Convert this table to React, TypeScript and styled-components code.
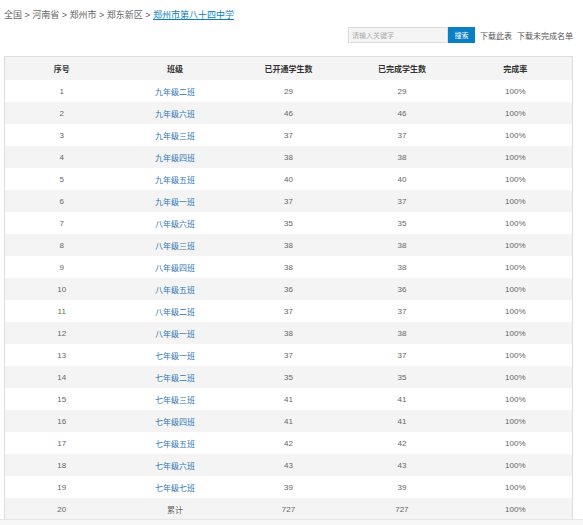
import React from "react";
import styled, { createGlobalStyle } from "styled-components";

const Global = createGlobalStyle`
  html, body { margin: 0; padding: 0; background: #fff; }
  body { font-family: "Liberation Sans", Arial, "Noto Sans CJK SC", sans-serif; color: #666; }
`;

const Page = styled.div`
  padding: 9px 10px 0 4px;
  display: flex;
  flex-direction: column;
`;

const Crumbs = styled.div`
  font-size: 9px;
  line-height: 12px;
  color: #666;
  white-space: nowrap;
`;

const CrumbLink = styled.a`
  color: #0a7fc3;
  text-decoration: underline;
`;

const Toolbar = styled.div`
  display: flex;
  justify-content: flex-end;
  align-items: center;
  margin-top: 6px;
  height: 16px;
`;

const SearchInput = styled.input`
  box-sizing: border-box;
  width: 100px;
  height: 16px;
  border: 1px solid #ddd;
  background: #f5f5f5;
  padding: 0 3px;
  font-size: 7px;
  font-family: inherit;
  outline: none;
  &::placeholder { color: #aaa; }
`;

const SearchButton = styled.button`
  box-sizing: border-box;
  width: 27px;
  height: 16px;
  border: none;
  background: #0a7fc3;
  color: #fff;
  font-size: 7px;
  font-family: inherit;
  padding: 0;
`;

const ToolLink = styled.a`
  font-size: 8px;
  color: #555;
  margin-left: 5px;
  white-space: nowrap;
`;

const Table = styled.div`
  margin-top: 13px;
  border: 1px solid #ddd;
  border-bottom: none;
`;

const Row = styled.div<{ $shade?: boolean; $head?: boolean }>`
  display: grid;
  grid-template-columns: repeat(5, 1fr);
  height: ${(p) => (p.$head ? "23px" : "22px")};
  align-items: center;
  background: ${(p) => (p.$shade ? "#f4f4f4" : "#fff")};
  font-size: 8px;
  color: ${(p) => (p.$head ? "#333" : "#666")};
  font-weight: ${(p) => (p.$head ? "bold" : "normal")};
`;

const Cell = styled.div<{ $link?: boolean }>`
  text-align: center;
  color: ${(p) => (p.$link ? "#2f74b5" : "inherit")};
`;

const ScrollBand = styled.div`
  position: fixed;
  left: 0;
  right: 0;
  bottom: 0;
  height: 5px;
  background: #f7f7f7;
  border-top: 1px solid #e6e6e6;
`;

const data: [string, number, number][] = [
  ["九年级二班", 29, 29],
  ["九年级六班", 46, 46],
  ["九年级三班", 37, 37],
  ["九年级四班", 38, 38],
  ["九年级五班", 40, 40],
  ["九年级一班", 37, 37],
  ["八年级六班", 35, 35],
  ["八年级三班", 38, 38],
  ["八年级四班", 38, 38],
  ["八年级五班", 36, 36],
  ["八年级二班", 37, 37],
  ["八年级一班", 38, 38],
  ["七年级一班", 37, 37],
  ["七年级二班", 35, 35],
  ["七年级三班", 41, 41],
  ["七年级四班", 41, 41],
  ["七年级五班", 42, 42],
  ["七年级六班", 43, 43],
  ["七年级七班", 39, 39],
];

export default function App() {
  return (
    <>
      <Global />
      <Page>
        <Crumbs>
          全国 &gt; 河南省 &gt; 郑州市 &gt; 郑东新区 &gt; <CrumbLink>郑州市第八十四中学</CrumbLink>
        </Crumbs>
        <Toolbar>
          <SearchInput placeholder="请输入关键字" />
          <SearchButton>搜索</SearchButton>
          <ToolLink>下载此表</ToolLink>
          <ToolLink>下载未完成名单</ToolLink>
        </Toolbar>
        <Table>
          <Row $head $shade>
            <Cell>序号</Cell>
            <Cell>班级</Cell>
            <Cell>已开通学生数</Cell>
            <Cell>已完成学生数</Cell>
            <Cell>完成率</Cell>
          </Row>
          {data.map(([name, a, b], i) => (
            <Row key={i} $shade={i % 2 === 1}>
              <Cell>{i + 1}</Cell>
              <Cell $link>{name}</Cell>
              <Cell>{a}</Cell>
              <Cell>{b}</Cell>
              <Cell>100%</Cell>
            </Row>
          ))}
          <Row $shade>
            <Cell>20</Cell>
            <Cell>累计</Cell>
            <Cell>727</Cell>
            <Cell>727</Cell>
            <Cell>100%</Cell>
          </Row>
        </Table>
      </Page>
      <ScrollBand />
    </>
  );
}
